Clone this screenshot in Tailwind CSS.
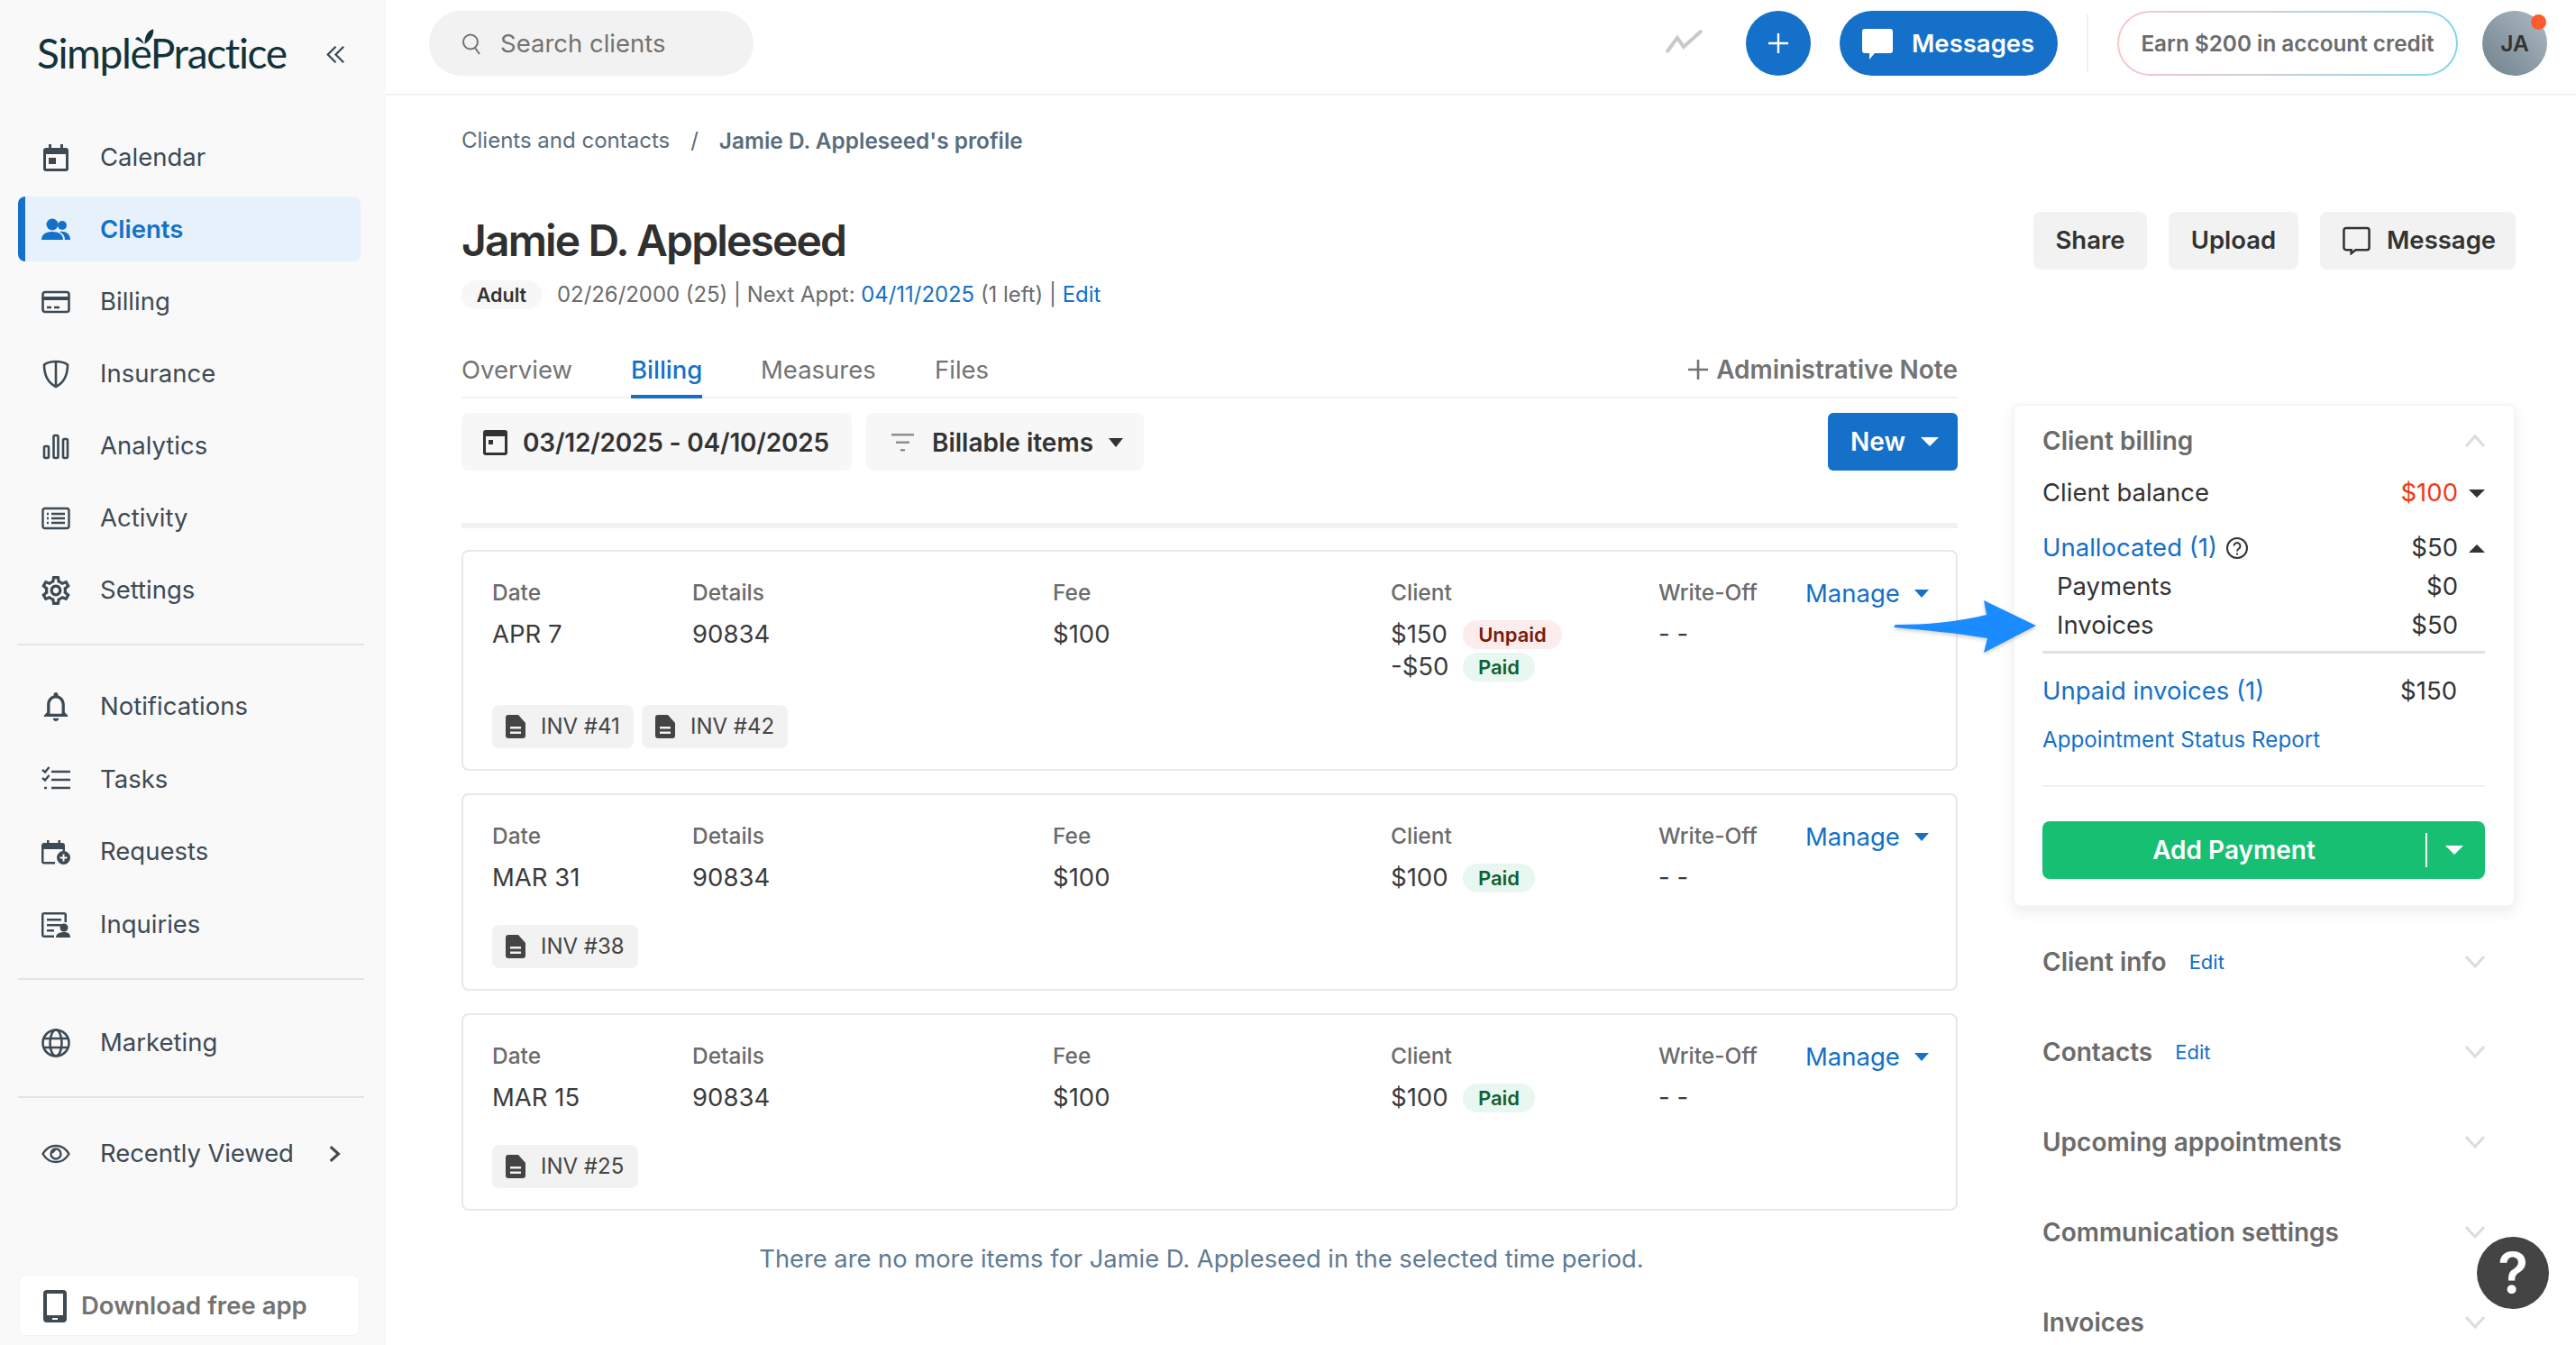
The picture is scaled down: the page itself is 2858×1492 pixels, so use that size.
<!DOCTYPE html>
<html lang="en">
<head>
  <meta charset="UTF-8">
  <meta name="viewport" content="width=device-width, initial-scale=1">
  <title>Jamie D. Appleseed - SimplePractice</title>
  <script src="https://cdn.jsdelivr.net/npm/@tailwindcss/browser@4"></script>
</head>
<body class="h-screen w-screen overflow-hidden flex bg-white text-[#333] text-[27.5px] font-['Inter',sans-serif]">

  <!-- sidebar -->
  <aside class="w-[428px] h-full shrink-0 bg-[#f9f9f9] flex flex-col">
    <div class="h-[138px] pl-[41px] pr-[45px] pt-[29px] flex items-start justify-between">
      <div class="relative h-[60px] leading-[60px] text-[46px] tracking-[-1.35px] text-[#11333a] font-['Lato',sans-serif]">
        SimplePractice
        <svg class="absolute left-[109px] top-[3px] w-[21px] h-[18px]" viewBox="0 0 24 20" fill="#11333a"><path d="M12 19C12 10 15 2 23 0c1 7-3 14-11 19z"/><path d="M11 19C8 16 4 14 0 13c1-1 2-3 3-3 4 1 7 5 8 9z"/></svg>
      </div>
      <svg class="w-[21px] h-[21px] mt-[21px]" viewBox="0 0 24 24" fill="none" stroke="#3d4a54" stroke-width="2.6"><path d="M12 2 2 12l10 10M22 2 12 12l10 10"/></svg>
    </div>

    <nav class="pl-[20px] pr-[24px] text-[#3d4a54]">
      <div class="flex flex-col gap-[8px]">
        <a class="h-[72px] flex items-center pl-[26px] pt-[2px] gap-[33px]">
          <svg class="w-[32px] h-[32px]" viewBox="0 0 32 32" fill="#3d4a54"><path d="M8 1h3v4h10V1h3v4h3a3 3 0 0 1 3 3v20a3 3 0 0 1-3 3H5a3 3 0 0 1-3-3V8a3 3 0 0 1 3-3h3zM5 12v16h22V12zm3 4h8v7H8z" fill-rule="evenodd"/></svg>
          Calendar
        </a>
        <a class="h-[72px] w-[380px] rounded-[8px] border-l-[8px] border-[#1470c8] bg-[#e7f1fb] text-[#1470c8] font-semibold flex items-center pl-[18px] pt-[2px] gap-[33px]">
          <svg class="w-[32px] h-[32px]" viewBox="0 0 32 32" fill="#1470c8"><circle cx="12" cy="10" r="6.5"/><path d="M0 27c0-6 5-9 12-9s12 3 12 9z"/><circle cx="23" cy="11" r="5"/><path d="M20 18c6-1 12 2 12 9h-6c0-4-2-7-6-9z"/></svg>
          Clients
        </a>
        <a class="h-[72px] flex items-center pl-[26px] pt-[2px] gap-[33px]">
          <svg class="w-[32px] h-[32px]" viewBox="0 0 32 32" fill="none" stroke="#3d4a54" stroke-width="2.6"><rect x="1.5" y="5" width="29" height="22" rx="2.5"/><path d="M1.5 12h29" stroke-width="4"/><path d="M6 22h5M14 22h6"/></svg>
          Billing
        </a>
        <a class="h-[72px] flex items-center pl-[26px] pt-[2px] gap-[33px]">
          <svg class="w-[32px] h-[32px]" viewBox="0 0 32 32" fill="none" stroke="#3d4a54" stroke-width="2.6"><path d="M16 2c5 0 10 1.500 13 3.500 0 12-4 20-13 24.500C7 25.500 3 17.500 3 5.500 6 3.500 11 2 16 2z"/><path d="M16 2v28"/></svg>
          Insurance
        </a>
        <a class="h-[72px] flex items-center pl-[26px] pt-[2px] gap-[33px]">
          <svg class="w-[32px] h-[32px]" viewBox="0 0 32 32" fill="none" stroke="#3d4a54" stroke-width="2.6"><rect x="3" y="16" width="5" height="13" rx="1.500"/><rect x="13.500" y="4" width="5" height="25" rx="1.500"/><rect x="24" y="8" width="5" height="21" rx="1.500"/></svg>
          Analytics
        </a>
        <a class="h-[72px] flex items-center pl-[26px] pt-[2px] gap-[33px]">
          <svg class="w-[32px] h-[32px]" viewBox="0 0 32 32" fill="none" stroke="#3d4a54" stroke-width="2.4"><rect x="1.500" y="5" width="29" height="22" rx="2.500"/><path d="M11 11h15M11 16h15M11 21h15M6 11h2M6 16h2M6 21h2"/></svg>
          Activity
        </a>
        <a class="h-[72px] flex items-center pl-[26px] pt-[2px] gap-[33px]">
          <svg class="w-[32px] h-[32px]" viewBox="2 2 20 20" fill="#3d4a54"><path d="M19.43 12.98c.04-.32.07-.64.07-.98 0-.34-.03-.66-.07-.98l2.11-1.65c.19-.15.24-.42.12-.64l-2-3.46c-.09-.16-.26-.25-.44-.25-.06 0-.12.01-.17.03l-2.49 1c-.52-.4-1.08-.73-1.69-.98l-.38-2.65C14.46 2.18 14.25 2 14 2h-4c-.25 0-.46.18-.49.42l-.38 2.65c-.61.25-1.17.59-1.69.98l-2.49-1c-.06-.02-.12-.03-.18-.03-.17 0-.34.09-.43.25l-2 3.46c-.13.22-.07.49.12.64l2.11 1.65c-.04.32-.07.65-.07.98 0 .33.03.66.07.98l-2.11 1.65c-.19.15-.24.42-.12.64l2 3.46c.09.16.26.25.44.25.06 0 .12-.01.17-.03l2.49-1c.52.4 1.08.73 1.69.98l.38 2.65c.03.24.24.42.49.42h4c.25 0 .46-.18.49-.42l.38-2.65c.61-.25 1.17-.59 1.69-.98l2.49 1c.06.02.12.03.18.03.17 0 .34-.09.43-.25l2-3.46c.12-.22.07-.49-.12-.64l-2.11-1.65zm-1.98-1.71c.04.31.05.52.05.73 0 .21-.02.43-.05.73l-.14 1.13.89.7 1.08.84-.7 1.21-1.27-.51-1.04-.42-.9.68c-.43.32-.84.56-1.25.73l-1.06.43-.16 1.13-.2 1.35h-1.4l-.19-1.35-.16-1.13-1.06-.43c-.43-.18-.83-.41-1.23-.71l-.91-.7-1.06.43-1.27.51-.7-1.21 1.08-.84.89-.7-.14-1.13c-.03-.31-.05-.54-.05-.74s.02-.43.05-.73l.14-1.13-.89-.7-1.08-.84.7-1.21 1.27.51 1.04.42.9-.68c.43-.32.84-.56 1.25-.73l1.06-.43.16-1.13.2-1.35h1.39l.19 1.35.16 1.13 1.06.43c.43.18.83.41 1.23.71l.91.7 1.06-.43 1.27-.51.7 1.21-1.07.85-.89.7.14 1.13zM12 8c-2.21 0-4 1.79-4 4s1.79 4 4 4 4-1.79 4-4-1.79-4-4-4zm0 6c-1.1 0-2-.9-2-2s.9-2 2-2 2 .9 2 2-.9 2-2 2z"/></svg>
          Settings
        </a>
      </div>

      <div class="h-[2px] bg-[#e4e4e4] mt-[24px] mb-[31px]"></div>

      <div class="flex flex-col gap-[8.5px]">
        <a class="h-[72px] flex items-center pl-[26px] pt-[2px] gap-[33px]">
          <svg class="w-[32px] h-[32px]" viewBox="2.500 2.500 19 19.500" fill="#3d4a54"><path d="M12 22c1.100 0 2-.9 2-2h-4c0 1.100.9 2 2 2zm6-6v-5c0-3.070-1.630-5.640-4.500-6.320V4c0-.83-.67-1.500-1.500-1.500s-1.500.67-1.500 1.500v.68C7.640 5.360 6 7.920 6 11v5l-2 2v1h16v-1l-2-2zm-2 1H8v-6c0-2.480 1.510-4.500 4-4.500s4 2.020 4 4.500v6z"/></svg>
          Notifications
        </a>
        <a class="h-[72px] flex items-center pl-[26px] pt-[2px] gap-[33px]">
          <svg class="w-[32px] h-[32px]" viewBox="0 0 32 32" fill="none" stroke="#3d4a54" stroke-width="2.4"><path d="M11 7h21M11 16h21M11 25h21"/><path d="M1 5l3 2.500L8.500 2M1 14l3 2.500L8.500 11"/><path d="M3 25h3"/></svg>
          Tasks
        </a>
        <a class="h-[72px] flex items-center pl-[26px] pt-[2px] gap-[33px]">
          <svg class="w-[32px] h-[32px]" viewBox="0 0 32 32" fill="#3d4a54"><path d="M6 3h2.500v3h10V3H21v3h2a3 3 0 0 1 3 3v6h-2.500v-2H2.500v14H15v2.500H3a3 3 0 0 1-3-3V9a3 3 0 0 1 3-3h3z"/><path fill-rule="evenodd" d="M24.500 15a7.500 7.500 0 1 1 0 15 7.500 7.500 0 0 1 0-15zm-1 3.500v3h-3v2h3v3h2v-3h3v-2h-3v-3z"/></svg>
          Requests
        </a>
        <a class="h-[72px] flex items-center pl-[26px] pt-[2px] gap-[33px]">
          <svg class="w-[32px] h-[32px]" viewBox="0 0 32 32" fill="#3d4a54"><path d="M3 2h22a3 3 0 0 1 3 3v8h-2.500V4.500h-23v23H14V30H3a3 3 0 0 1-3-3V5a3 3 0 0 1 3-3z"/><path d="M6 9h16v2.400H6zM6 15h16v2.400H6zM6 21h8v2.400H6z"/><circle cx="25" cy="19" r="4.500"/><path d="M16 30c0-4 4-6 9-6s7 2 7 6z"/></svg>
          Inquiries
        </a>
      </div>

      <div class="h-[2px] bg-[#e4e4e4] mt-[24px] mb-[33px]"></div>

      <a class="h-[72px] flex items-center pl-[26px] pt-[2px] gap-[33px]">
        <svg class="w-[32px] h-[32px]" viewBox="0 0 32 32" fill="none" stroke="#3d4a54" stroke-width="2.600"><circle cx="16" cy="16" r="14.500"/><ellipse cx="16" cy="16" rx="6.500" ry="14.500"/><path d="M2 11h28M2 21h28"/></svg>
        Marketing
      </a>

      <div class="h-[2px] bg-[#e4e4e4] mt-[24px] mb-[26px]"></div>

      <a class="h-[72px] flex items-center pl-[26px] gap-[33px] whitespace-nowrap">
        <svg class="w-[32px] h-[32px]" viewBox="0 0 32 32" fill="none" stroke="#3d4a54" stroke-width="2.400"><path d="M1.500 16C5 10 10 7 16 7s11 3 14.500 9C27 22 22 25 16 25S5 22 1.500 16z"/><circle cx="16" cy="16" r="5.500"/><path d="M12.500 15a3.500 3.500 0 0 1 3-3" stroke-width="2"/></svg>
        <span class="tracking-[-0.1px]">Recently Viewed</span>
        <svg class="w-[14px] h-[22px] ml-[6px]" viewBox="0 0 16 24" fill="none" stroke="#3d4a54" stroke-width="3.500"><path d="M2 3l10 9-10 9"/></svg>
      </a>
    </nav>

    <div class="mt-auto mb-[10px] ml-[21px] w-[378px] h-[68px] bg-white rounded-[8px] border border-[#f2f2f2] flex items-center pl-[26px] pt-[2px] gap-[16px] font-semibold text-[#737373]">
      <svg class="w-[26px] h-[36px]" viewBox="0 0 26 36" fill="#3d4a54"><path fill-rule="evenodd" d="M4 0h18a4 4 0 0 1 4 4v28a4 4 0 0 1-4 4H4a4 4 0 0 1-4-4V4a4 4 0 0 1 4-4zm0 4v24h18V4zm6 27v2h6v-2z"/></svg>
      Download free app
    </div>
  </aside>

  <div class="flex-1 min-w-0 h-full flex flex-col relative">
    <!-- top bar -->
    <header class="h-[106px] shrink-0 border-b-2 border-[#f2f2f2] flex items-start pt-[12px] pl-[48px] pr-[32px]">
      <div class="w-[360px] h-[72px] rounded-full bg-[#f2f2f2] flex items-center pl-[36px] pt-[2px] gap-[21px] text-[#737373]">
        <svg class="w-[22px] h-[26px]" viewBox="0 0 22 26" fill="none" stroke="#737373" stroke-width="2"><circle cx="10" cy="10.500" r="8"/><path d="M15 17l5 7"/></svg>
        Search clients
      </div>
      <svg class="w-[41px] h-[26px] ml-auto mt-[21px]" viewBox="0 0 41 26" fill="none" stroke="#c9c9c9" stroke-width="4"><path d="M1 25 13 9l7 10L40 1"/></svg>
      <div class="w-[72px] h-[72px] ml-[48px] rounded-full bg-[#1470c8] flex items-center justify-center">
        <svg class="w-[24px] h-[24px]" viewBox="0 0 24 24" stroke="#fff" stroke-width="2.400"><path d="M12 1v22M1 12h22"/></svg>
      </div>
      <div class="w-[242px] h-[72px] ml-[32px] rounded-full bg-[#1470c8] flex items-center pl-[25px] pt-[2px] gap-[21px] text-white font-semibold">
        <svg class="w-[34px] h-[34px]" viewBox="0 0 34 34" fill="#fff"><path d="M3 0h28a3 3 0 0 1 3 3v21a3 3 0 0 1-3 3H14l-6 7v-7H3a3 3 0 0 1-3-3V3a3 3 0 0 1 3-3z"/></svg>
        Messages
      </div>
      <div class="w-[2px] h-[64px] ml-[32px] mt-[4px] bg-[#f0f0f0]"></div>
      <div class="w-[378px] h-[72px] ml-[32px] rounded-full p-[2px] bg-linear-to-r from-[#f9c7c9] to-[#7fd6ee]">
        <div class="w-full h-full rounded-full bg-white flex items-center justify-center text-[24.3px] font-semibold text-[#6b6b6b]">Earn $200 in account credit</div>
      </div>
      <div class="relative w-[72px] h-[72px] ml-[27px] rounded-full bg-linear-to-bl from-[#aebac2] to-[#6f828d] flex items-center justify-center text-[24.5px] font-semibold text-[#333]">
        JA
        <span class="absolute top-[4px] right-[1px] w-[17px] h-[17px] rounded-full bg-[#ff5c2e]"></span>
      </div>
    </header>

    <div class="flex flex-1 min-h-0 pl-[84px]">
      <!-- profile column -->
      <main class="w-[1660px] shrink-0 pt-[34px]">
        <div class="h-[32px] leading-[32px] text-[24px] text-[#5a6d7c] flex">
          <span>Clients and contacts</span>
          <span class="ml-[23px] mr-[23px]">/</span>
          <span class="text-[24.4px] font-semibold">Jamie D. Appleseed's profile</span>
        </div>
        <h1 class="mt-[65px] h-[60px] leading-[60px] text-[48px] font-semibold text-[#303030] tracking-[-1.85px]">Jamie D. Appleseed</h1>
        <div class="mt-[14px] h-[32px] flex items-center text-[23.9px] text-[#6b6b6b]">
          <span class="w-[89px] h-[32px] rounded-full bg-[#f7f7f7] flex items-center justify-center text-[21.5px] font-semibold text-[#333]">Adult</span>
          <span class="ml-[17px]">02/26/2000 (25) | Next Appt: <a class="text-[#1470c8]">04/11/2025</a> (1 left) | <a class="text-[#1470c8]">Edit</a></span>
        </div>

        <div class="mt-[37px] h-[62px] border-b-2 border-[#f2f2f2] flex items-start text-[#737373] leading-[60px]">
          <a class="w-[188px]">Overview</a>
          <a class="w-[79px] h-[62px] border-b-4 border-[#1470c8] text-[#1470c8] font-medium">Billing</a>
          <a class="w-[128px] ml-[65px]">Measures</a>
          <a class="w-[60px] ml-[65px]">Files</a>
          <a class="ml-auto text-[28px] font-semibold flex items-center gap-[8px]">
            <svg class="w-[24px] h-[24px]" viewBox="0 0 24 24" stroke="#737373" stroke-width="2.600"><path d="M12 1v22M1 12h22"/></svg>
            Administrative Note
          </a>
        </div>

        <div class="mt-[16px] h-[64px] flex text-[28px] font-semibold text-[#333]">
          <div class="w-[433px] rounded-[8px] bg-[#f7f7f7] flex items-center pl-[24px] pt-[2px] gap-[17px] tracking-[-0.2px]">
            <svg class="w-[27px] h-[28px]" viewBox="0 0 27 28" fill="#333"><path fill-rule="evenodd" d="M3 0h21a3 3 0 0 1 3 3v22a3 3 0 0 1-3 3H3a3 3 0 0 1-3-3V3a3 3 0 0 1 3-3zm0 7v18h21V7zm3 4h5v5H6z"/></svg>
            03/12/2025 - 04/10/2025
          </div>
          <div class="w-[308px] ml-[16px] rounded-[8px] bg-[#f7f7f7] flex items-center pl-[28px] pt-[2px]">
            <svg class="w-[25px] h-[20px] mr-[20px]" viewBox="0 0 25 20" fill="#8f8f8f"><path d="M0 0h25v2.500H0zM5 8.500h15V11H5zM10 17h5v2.500h-5z"/></svg>
            Billable items
            <svg class="w-[16px] h-[10px] ml-[17px]" viewBox="0 0 16 10" fill="#333"><path d="M0 0h16L8 10z"/></svg>
          </div>
          <div class="w-[144px] ml-auto rounded-[6px] bg-[#1470c8] text-white flex items-center pl-[25px] gap-[17px]">
            New
            <svg class="w-[20px] h-[10px]" viewBox="0 0 20 10" fill="#fff"><path d="M0 0h20L10 10z"/></svg>
          </div>
        </div>

        <div class="mt-[58px] h-[6px] bg-[#f2f2f2]"></div>

        <!-- billing items -->
        <div class="mt-[24px] flex flex-col gap-[25px]">
          <section class="h-[245px] rounded-[8px] border-2 border-[#e8e8e8] pt-[29px] pl-[32px] pr-[32px]">
            <div class="grid grid-cols-[222px_400px_375px_297px_163px_1fr] grid-rows-[32px_auto] text-[24.5px]">
              <span class="font-medium text-[#6b6b6b] leading-[32px]">Date</span>
              <span class="font-medium text-[#6b6b6b] leading-[32px]">Details</span>
              <span class="font-medium text-[#6b6b6b] leading-[32px]">Fee</span>
              <span class="font-medium text-[#6b6b6b] leading-[32px]">Client</span>
              <span class="font-medium text-[#6b6b6b] leading-[32px]">Write-Off</span>
              <span class="flex items-center pt-[3px] text-[27.5px] text-[#1470c8]">Manage<svg class="w-[16px] h-[9px] ml-[16px]" viewBox="0 0 16 9" fill="#1470c8"><path d="M0 0h16L8 9z"/></svg></span>
              <span class="mt-[14px] text-[27.5px] leading-[32px] text-[#3b3b3b]">APR 7</span>
              <span class="mt-[14px] text-[27.5px] leading-[32px] text-[#3b3b3b]">90834</span>
              <span class="mt-[14px] text-[27.5px] leading-[32px] text-[#3b3b3b]">$100</span>
              <div class="mt-[15px] flex flex-col gap-[4px] text-[27.5px] leading-[32px] text-[#3b3b3b]">
                <div class="flex items-center"><span class="w-[80px] -mt-[3px]">$150</span><span class="h-[32px] w-[110px] rounded-full bg-[#fceceb] text-[#7a1a0c] text-[22px] font-semibold flex items-center justify-center">Unpaid</span></div>
                <div class="flex items-center"><span class="w-[80px] -mt-[3px]">-$50</span><span class="h-[32px] w-[80px] rounded-full bg-[#e8f7f0] text-[#0e6232] text-[22px] font-semibold flex items-center justify-center">Paid</span></div>
              </div>
              <span class="mt-[14px] text-[27.5px] leading-[32px] text-[#3b3b3b]">- -</span>
            </div>
            <div class="mt-[26px] h-[48px] flex gap-[9px]">
              <div class="w-[157px] h-[48px] rounded-[8px] bg-[#f2f2f2] flex items-center pl-[15px] gap-[17px] text-[24px] text-[#444]">
                <svg class="w-[22px] h-[26px]" viewBox="0 0 22 26" fill="#444"><path fill-rule="evenodd" d="M3 0h11l8 9v14a3 3 0 0 1-3 3H3a3 3 0 0 1-3-3V3a3 3 0 0 1 3-3zm2 13v2.500h12V13zm0 5.500V21h12v-2.500z"/></svg>
                INV #41
              </div>
              <div class="w-[162px] h-[48px] rounded-[8px] bg-[#f2f2f2] flex items-center pl-[15px] gap-[17px] text-[24px] text-[#444]">
                <svg class="w-[22px] h-[26px]" viewBox="0 0 22 26" fill="#444"><path fill-rule="evenodd" d="M3 0h11l8 9v14a3 3 0 0 1-3 3H3a3 3 0 0 1-3-3V3a3 3 0 0 1 3-3zm2 13v2.500h12V13zm0 5.500V21h12v-2.500z"/></svg>
                INV #42
              </div>
            </div>
          </section>

          <section class="h-[219px] rounded-[8px] border-2 border-[#e8e8e8] pt-[29px] pl-[32px] pr-[32px]">
            <div class="grid grid-cols-[222px_400px_375px_297px_163px_1fr] grid-rows-[32px_auto] text-[24.5px]">
              <span class="font-medium text-[#6b6b6b] leading-[32px]">Date</span>
              <span class="font-medium text-[#6b6b6b] leading-[32px]">Details</span>
              <span class="font-medium text-[#6b6b6b] leading-[32px]">Fee</span>
              <span class="font-medium text-[#6b6b6b] leading-[32px]">Client</span>
              <span class="font-medium text-[#6b6b6b] leading-[32px]">Write-Off</span>
              <span class="flex items-center pt-[3px] text-[27.5px] text-[#1470c8]">Manage<svg class="w-[16px] h-[9px] ml-[16px]" viewBox="0 0 16 9" fill="#1470c8"><path d="M0 0h16L8 9z"/></svg></span>
              <span class="mt-[14px] text-[27.5px] leading-[32px] text-[#3b3b3b]">MAR 31</span>
              <span class="mt-[14px] text-[27.5px] leading-[32px] text-[#3b3b3b]">90834</span>
              <span class="mt-[14px] text-[27.5px] leading-[32px] text-[#3b3b3b]">$100</span>
              <div class="mt-[15px] flex items-center text-[27.5px] leading-[32px] text-[#3b3b3b]"><span class="w-[80px] -mt-[3px]">$100</span><span class="h-[32px] w-[80px] rounded-full bg-[#e8f7f0] text-[#0e6232] text-[22px] font-semibold flex items-center justify-center">Paid</span></div>
              <span class="mt-[14px] text-[27.5px] leading-[32px] text-[#3b3b3b]">- -</span>
            </div>
            <div class="mt-[36px] h-[48px] flex">
              <div class="w-[162px] h-[48px] rounded-[8px] bg-[#f2f2f2] flex items-center pl-[15px] gap-[17px] text-[24px] text-[#444]">
                <svg class="w-[22px] h-[26px]" viewBox="0 0 22 26" fill="#444"><path fill-rule="evenodd" d="M3 0h11l8 9v14a3 3 0 0 1-3 3H3a3 3 0 0 1-3-3V3a3 3 0 0 1 3-3zm2 13v2.500h12V13zm0 5.500V21h12v-2.500z"/></svg>
                INV #38
              </div>
            </div>
          </section>

          <section class="h-[219px] rounded-[8px] border-2 border-[#e8e8e8] pt-[29px] pl-[32px] pr-[32px]">
            <div class="grid grid-cols-[222px_400px_375px_297px_163px_1fr] grid-rows-[32px_auto] text-[24.5px]">
              <span class="font-medium text-[#6b6b6b] leading-[32px]">Date</span>
              <span class="font-medium text-[#6b6b6b] leading-[32px]">Details</span>
              <span class="font-medium text-[#6b6b6b] leading-[32px]">Fee</span>
              <span class="font-medium text-[#6b6b6b] leading-[32px]">Client</span>
              <span class="font-medium text-[#6b6b6b] leading-[32px]">Write-Off</span>
              <span class="flex items-center pt-[3px] text-[27.5px] text-[#1470c8]">Manage<svg class="w-[16px] h-[9px] ml-[16px]" viewBox="0 0 16 9" fill="#1470c8"><path d="M0 0h16L8 9z"/></svg></span>
              <span class="mt-[14px] text-[27.5px] leading-[32px] text-[#3b3b3b]">MAR 15</span>
              <span class="mt-[14px] text-[27.5px] leading-[32px] text-[#3b3b3b]">90834</span>
              <span class="mt-[14px] text-[27.5px] leading-[32px] text-[#3b3b3b]">$100</span>
              <div class="mt-[15px] flex items-center text-[27.5px] leading-[32px] text-[#3b3b3b]"><span class="w-[80px] -mt-[3px]">$100</span><span class="h-[32px] w-[80px] rounded-full bg-[#e8f7f0] text-[#0e6232] text-[22px] font-semibold flex items-center justify-center">Paid</span></div>
              <span class="mt-[14px] text-[27.5px] leading-[32px] text-[#3b3b3b]">- -</span>
            </div>
            <div class="mt-[36px] h-[48px] flex">
              <div class="w-[162px] h-[48px] rounded-[8px] bg-[#f2f2f2] flex items-center pl-[15px] gap-[17px] text-[24px] text-[#444]">
                <svg class="w-[22px] h-[26px]" viewBox="0 0 22 26" fill="#444"><path fill-rule="evenodd" d="M3 0h11l8 9v14a3 3 0 0 1-3 3H3a3 3 0 0 1-3-3V3a3 3 0 0 1 3-3zm2 13v2.500h12V13zm0 5.500V21h12v-2.500z"/></svg>
                INV #25
              </div>
            </div>
          </section>
        </div>

        <p class="mt-[34px] pr-[18px] text-center text-[27.3px] leading-[40px] text-[#5f7a91]">There are no more items for Jamie D. Appleseed in the selected time period.</p>
      </main>

      <!-- right column -->
      <div class="w-[558px] ml-[61px] shrink-0 pt-[129px]">
        <div class="h-[64px] flex justify-end gap-[24px] text-[27.5px] font-semibold text-[#333]">
          <button class="w-[126px] rounded-[8px] bg-[#f2f2f2]">Share</button>
          <button class="w-[144px] rounded-[8px] bg-[#f2f2f2]">Upload</button>
          <button class="w-[217px] rounded-[8px] bg-[#f2f2f2] flex items-center pl-[25px] gap-[18px]">
            <svg class="w-[31px] h-[32px]" viewBox="0 0 32 32" fill="none" stroke="#333" stroke-width="2.600"><path d="M4 1.500h24A2.500 2.500 0 0 1 30.500 4v20a2.500 2.500 0 0 1-2.500 2.500H15l-5 4v-4H4A2.500 2.500 0 0 1 1.500 24V4A2.500 2.500 0 0 1 4 1.500z"/></svg>
            Message
          </button>
        </div>

        <div class="mt-[149px] h-[558px] rounded-[8px] border-2 border-[#f5f5f5] shadow-[0_6px_16px_rgba(0,0,0,0.07)] pt-[21px] pl-[31px] pr-[32px]">
          <div class="h-[36px] flex items-center justify-between text-[28px] font-semibold text-[#6b6b6b]">
            Client billing
            <svg class="w-[22px] h-[14px]" viewBox="0 0 22 14" fill="none" stroke="#dcdcdc" stroke-width="3"><path d="M1 13 11 2l10 11"/></svg>
          </div>
          <div class="mt-[20px] h-[40px] flex items-center">
            Client balance
            <span class="ml-auto text-[#f03a17]">$100</span>
            <svg class="w-[18px] h-[9px] ml-[12px]" viewBox="0 0 18 9" fill="#333"><path d="M0 0h18L9 9z"/></svg>
          </div>
          <div class="mt-[21px] h-[40px] flex items-center">
            <a class="text-[#1470c8]">Unallocated (1)</a>
            <svg class="w-[24px] h-[24px] ml-[10px]" viewBox="0 0 24 24" fill="none" stroke="#333" stroke-width="2"><circle cx="12" cy="12" r="11"/><path d="M8.500 9.500a3.500 3.500 0 1 1 5.500 3c-1.500 1-2 1.500-2 3"/><path d="M12 17.500v2" /></svg>
            <span class="ml-auto">$50</span>
            <svg class="w-[18px] h-[9px] ml-[12px]" viewBox="0 0 18 9" fill="#333"><path d="M0 9h18L9 0z"/></svg>
          </div>
          <div class="mt-[3px] h-[40px] pl-[16px] pr-[30px] flex items-center justify-between"><span>Payments</span><span>$0</span></div>
          <div class="mt-[3px] h-[40px] pl-[16px] pr-[30px] flex items-center justify-between"><span>Invoices</span><span>$50</span></div>
          <div class="mt-[8px] h-[3px] bg-[#e0e0e0]"></div>
          <div class="mt-[22px] h-[40px] pr-[31px] flex items-center justify-between"><a class="text-[#1470c8]">Unpaid invoices (1)</a><span>$150</span></div>
          <a class="mt-[18px] block h-[32px] leading-[32px] text-[24.2px] text-[#1470c8]">Appointment Status Report</a>
          <div class="mt-[34px] h-[2px] bg-[#f0f0f0]"></div>
          <div class="mt-[38px] h-[64px] rounded-[8px] bg-[#17bf73] text-[28px] text-white font-semibold flex items-center">
            <span class="w-[425px] text-center">Add Payment</span>
            <span class="w-[2px] h-[38px] bg-white"></span>
            <svg class="w-[20px] h-[10px] ml-[20px]" viewBox="0 0 20 10" fill="#fff"><path d="M0 0h20L10 10z"/></svg>
          </div>
        </div>

        <div class="mt-[11px] pl-[33px] pr-[34px] text-[28px] font-semibold text-[#6b6b6b]">
          <div class="h-[100px] flex items-center">Client info<a class="ml-[25px] text-[22px] font-normal text-[#1470c8]">Edit</a><svg class="w-[22px] h-[14px] ml-auto" viewBox="0 0 22 14" fill="none" stroke="#dcdcdc" stroke-width="3"><path d="M1 1l10 11L21 1"/></svg></div>
          <div class="h-[100px] flex items-center">Contacts<a class="ml-[25px] text-[22px] font-normal text-[#1470c8]">Edit</a><svg class="w-[22px] h-[14px] ml-auto" viewBox="0 0 22 14" fill="none" stroke="#dcdcdc" stroke-width="3"><path d="M1 1l10 11L21 1"/></svg></div>
          <div class="h-[100px] flex items-center">Upcoming appointments<svg class="w-[22px] h-[14px] ml-auto" viewBox="0 0 22 14" fill="none" stroke="#dcdcdc" stroke-width="3"><path d="M1 1l10 11L21 1"/></svg></div>
          <div class="h-[100px] flex items-center">Communication settings<svg class="w-[22px] h-[14px] ml-auto" viewBox="0 0 22 14" fill="none" stroke="#dcdcdc" stroke-width="3"><path d="M1 1l10 11L21 1"/></svg></div>
          <div class="h-[100px] flex items-center">Invoices<svg class="w-[22px] h-[14px] ml-auto" viewBox="0 0 22 14" fill="none" stroke="#dcdcdc" stroke-width="3"><path d="M1 1l10 11L21 1"/></svg></div>
        </div>
      </div>
    </div>

    <!-- annotation arrow -->
    <svg class="absolute left-[1672px] top-[662px] w-[164px] h-[66px] drop-shadow-[0_2px_2px_rgba(0,0,0,0.2)]" viewBox="0 0 164 66" fill="#1a8cff"><path d="M2 34c-1-2 0-3 2-3 32 0 68-3 100-11l-3-16 58 28-58 30 4-16c-36-6-70-9-103-12z"/></svg>

    <!-- help -->
    <div class="absolute left-[2320px] top-[1372px] w-[80px] h-[80px] rounded-full bg-[#444] flex items-center justify-center text-[62px] leading-none font-semibold text-white">?</div>
  </div>

</body>
</html>
